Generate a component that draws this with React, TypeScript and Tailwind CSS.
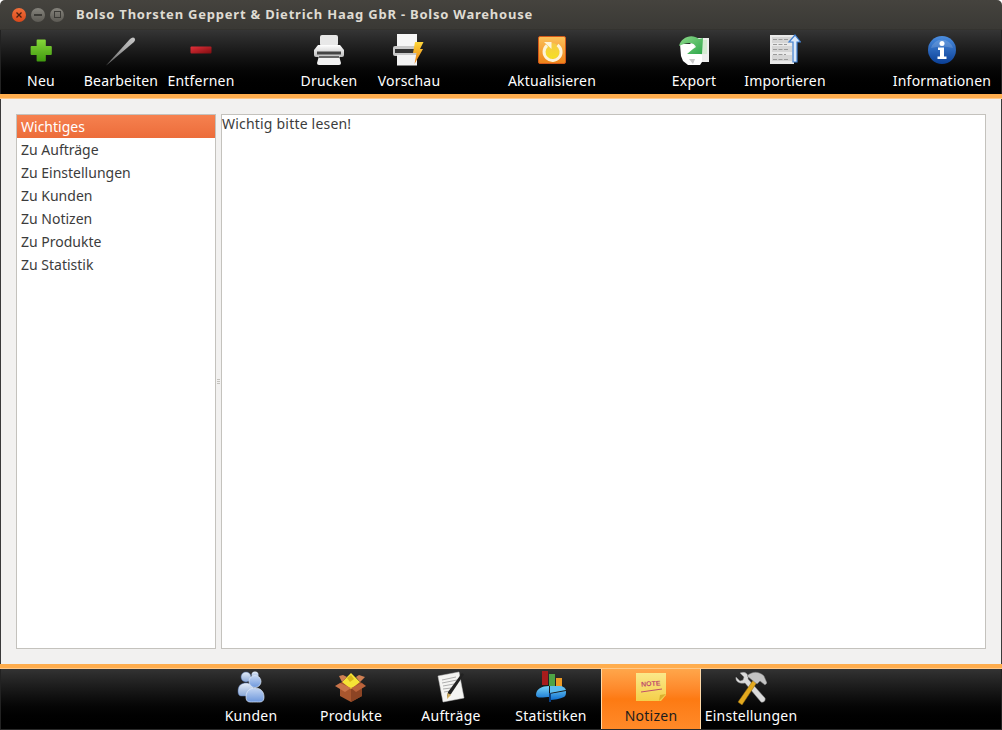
const FONT = "font-['Noto_Sans',sans-serif]"

function Plus() {
  return (
    <svg width="32" height="32" viewBox="0 0 32 32">
      <defs><linearGradient id="gp" x1="0" y1="0" x2="0" y2="1"><stop offset="0" stopColor="#86d63a" /><stop offset="1" stopColor="#3f9a0e" /></linearGradient></defs>
      <path d="M12 5.500h8a1 1 0 0 1 1 1V12h5.500a1 1 0 0 1 1 1v7a1 1 0 0 1-1 1H21v5.500a1 1 0 0 1-1 1h-8a1 1 0 0 1-1-1V21H5.500a1 1 0 0 1-1-1v-7a1 1 0 0 1 1-1H11V6.500a1 1 0 0 1 1-1z" fill="url(#gp)" transform="translate(1.500 0) scale(.92 1)" />
    </svg>
  )
}

function Pen() {
  return (
    <svg width="32" height="32" viewBox="0 0 32 32">
      <defs><linearGradient id="gn" x1="0" y1="1" x2="1" y2="0"><stop offset="0" stopColor="#5c5c5c" /><stop offset=".6" stopColor="#a8a8a8" /><stop offset="1" stopColor="#c8c8c8" /></linearGradient></defs>
      <path d="M1 31.500 L25 5 Q27.500 2.500 29.500 4 Q31 6 29 8 L3 30z" fill="url(#gn)" />
    </svg>
  )
}

function Minus() {
  return (
    <svg width="32" height="32" viewBox="0 0 32 32">
      <defs><linearGradient id="gm" x1="0" y1="0" x2="1" y2="1"><stop offset="0" stopColor="#e4303a" /><stop offset="1" stopColor="#7f0d10" /></linearGradient></defs>
      <rect x="5.500" y="12.500" width="21" height="7" rx="1" fill="url(#gm)" />
    </svg>
  )
}

function Printer() {
  return (
    <svg width="32" height="32" viewBox="0 0 32 32">
      <defs><linearGradient id="gr" x1="0" y1="0" x2="0" y2="1"><stop offset="0" stopColor="#fff" /><stop offset="1" stopColor="#bdbdbd" /></linearGradient></defs>
      <rect x="7" y="1" width="18" height="11" rx="2" fill="#e8e8e8" />
      <path d="M5 11h22l4 5v5a2 2 0 0 1-2 2H3a2 2 0 0 1-2-2v-5z" fill="url(#gr)" />
      <rect x="4" y="17.500" width="24" height="3" fill="#444" />
      <path d="M6 22h20l2 7a2 2 0 0 1-2 2H6a2 2 0 0 1-2-2z" fill="#f2f2f2" />
      <rect x="6" y="22" width="20" height="2" fill="#666" />
    </svg>
  )
}

function Preview() {
  return (
    <svg width="32" height="32" viewBox="0 0 32 32">
      <defs><linearGradient id="gb" x1="0" y1="0" x2="0" y2="1"><stop offset="0" stopColor="#ffd83c" /><stop offset="1" stopColor="#e77a10" /></linearGradient></defs>
      <rect x="4" y="0" width="20" height="12" fill="#f6f6f6" />
      <rect x="0" y="12" width="26" height="10" rx="2" fill="#c9c9c9" />
      <rect x="2" y="15" width="22" height="4" fill="#333" />
      <rect x="4" y="21" width="20" height="10.500" fill="#f3f3f3" />
      <path d="M22 8h8.500l-3.500 7h3l-8.500 15 2-11h-3.500z" fill="url(#gb)" />
    </svg>
  )
}

function Refresh() {
  return (
    <svg width="32" height="32" viewBox="0 0 32 32">
      <defs>
        <linearGradient id="gf" x1="0" y1="0" x2="0" y2="1"><stop offset="0" stopColor="#fcc25a" /><stop offset="1" stopColor="#ee8218" /></linearGradient>
        <linearGradient id="gy" x1="0" y1="0" x2="0" y2="1"><stop offset="0" stopColor="#f6c848" /><stop offset="1" stopColor="#f5e020" /></linearGradient>
      </defs>
      <rect x="2.500" y="2.500" width="27" height="27" rx="1.500" fill="url(#gf)" stroke="#d2591a" />
      <circle cx="16" cy="17" r="8" fill="url(#gy)" />
      <path d="M11 11.500 A8.500 8.500 0 1 0 21.500 11" fill="none" stroke="#fdf3d8" strokeWidth="3" />
      <path d="M8 8h7.500v7z" fill="#fdf3d8" />
    </svg>
  )
}

function Export() {
  return (
    <svg width="32" height="32" viewBox="0 0 32 32">
      <defs><linearGradient id="ge" x1="0" y1="0" x2="1" y2="1"><stop offset="0" stopColor="#8ed88a" /><stop offset="1" stopColor="#2ea84b" /></linearGradient></defs>
      <path d="M12 4h19v24H14z" fill="#eeeeee" />
      <path d="M2 10h14l1 8 7 3v7l-2 3H10l-5-4-2-5z" fill="#fff" />
      <path d="M11 25h6l-2 5z" fill="#c8c8c8" />
      <rect x="22" y="6" width="7" height="14" fill="#d5ecd2" />
      <path d="M1 12C3 3 14-1 21 5l4-1-1 16H9l6-5 3-2c-2-5-9-5-17-1z" fill="url(#ge)" />
    </svg>
  )
}

function Import() {
  return (
    <svg width="32" height="32" viewBox="0 0 32 32">
      <rect x="1" y="1" width="24" height="29" fill="#e9e9e9" />
      <rect x="3" y="3" width="20" height="6" fill="#d5d5d5" />
      <rect x="3" y="12" width="20" height="6" fill="#d5d5d5" />
      <rect x="3" y="21" width="20" height="6" fill="#d5d5d5" />
      <g stroke="#9a9a9a" strokeWidth="1" strokeDasharray="4 1.500">
        <path d="M4 5.500h16M4 10.500h14M4 15.500h15M4 20.500h13M4 25.500h16" />
      </g>
      <path d="M26 1l5.500 7H28v20h-4V8h-4z" fill="#dbe8f8" stroke="#3f7fd0" strokeWidth="1.200" />
    </svg>
  )
}

function Info() {
  return (
    <svg width="32" height="32" viewBox="0 0 32 32">
      <defs><linearGradient id="gi" x1="0" y1="0" x2="0" y2="1"><stop offset="0" stopColor="#4c8ee0" /><stop offset="1" stopColor="#0a3f96" /></linearGradient></defs>
      <circle cx="16" cy="16" r="14" fill="url(#gi)" />
      <path d="M5 14a11.500 11.500 0 0 1 22 0q-11-3-22 0z" fill="#fff" opacity=".15" />
      <circle cx="16" cy="9.500" r="2.500" fill="#fff" />
      <path d="M12 13.500h6v9h2.500v2.500h-9v-2.500H14v-6.500h-2z" fill="#fff" />
    </svg>
  )
}

function Users() {
  return (
    <svg width="32" height="32" viewBox="0 0 32 32">
      <defs>
        <linearGradient id="gu" x1="0" y1="0" x2="0" y2="1"><stop offset="0" stopColor="#e6eef8" /><stop offset="1" stopColor="#8aa8d8" /></linearGradient>
        <linearGradient id="gv" x1="0" y1="0" x2="0" y2="1"><stop offset="0" stopColor="#c4d6f2" /><stop offset="1" stopColor="#6d97dc" /></linearGradient>
      </defs>
      <circle cx="11" cy="6" r="5" fill="url(#gu)" stroke="#4f6fa8" strokeWidth=".5" />
      <circle cx="20" cy="4" r="3.500" fill="url(#gu)" />
      <path d="M3 20c0-6 4-8 8-8s8 2 8 8-3 5-8 5-8 1-8-5z" fill="url(#gu)" stroke="#4f6fa8" strokeWidth=".5" />
      <circle cx="20" cy="10.500" r="6" fill="url(#gv)" stroke="#dfe9f8" strokeWidth=".7" />
      <path d="M11 26c0-6 4-9 9-9s9 3 9 9-4 5-9 5-9 1-9-5z" fill="url(#gv)" stroke="#dfe9f8" strokeWidth=".7" />
    </svg>
  )
}

function Box() {
  return (
    <svg width="32" height="32" viewBox="0 0 32 32">
      <path d="M5 12l11-5 11 5v13l-11 6-11-6z" fill="#a8562e" />
      <path d="M16 18v13l11-6V12z" fill="#8c4424" />
      <path d="M7 11l9-9 9 9-9 7z" fill="#f6e336" />
      <path d="M12 7l4-3 3 4-4 3z" fill="#d8b81a" />
      <path d="M5 12L0 15l10 6 6-4z" fill="#c9744a" />
      <path d="M27 12l4 3-10 6-5-4z" fill="#bb633b" />
      <path d="M7 11L4 5l4-1 4 2zM25 11l5-5-6-2-3 2z" fill="#cf8053" />
    </svg>
  )
}

function Order() {
  return (
    <svg width="32" height="32" viewBox="0 0 32 32">
      <path d="M3 5L24 1l5 26-21 4z" fill="#f4f4f2" stroke="#c8c8c8" strokeWidth=".5" />
      <g stroke="#9c9c9c" strokeWidth=".8">
        <path d="M7 9l14-3M7 12l15-3M8 15l11-2M8 18l8-1M9 21l6-1" />
      </g>
      <path d="M12 26l1-5L27 2l2 1.500L16 23z" fill="#222" />
      <path d="M12 28l.5-6 3.500 2z" fill="#d4b060" />
    </svg>
  )
}

function Chart() {
  return (
    <svg width="32" height="32" viewBox="0 0 32 32">
      <defs><linearGradient id="gc" x1="0" y1="0" x2="0" y2="1"><stop offset="0" stopColor="#79d4f8" /><stop offset="1" stopColor="#0f6fd0" /></linearGradient></defs>
      <rect x="7" y="0" width="6" height="14" fill="#a81c1c" />
      <rect x="14" y="3" width="6" height="12" fill="#4ea345" />
      <rect x="21" y="7" width="6" height="9" fill="#ec9a25" />
      <path d="M1 24c0-6 6-9 13-9v8l17-3c0 2 0 5-2 6-4 2-10 3-14 3v-3c-6 0-14 2-14-2z" fill="url(#gc)" />
      <path d="M15 15h10c3 0 5 2 6 4l-16 3z" fill="#5ebdf0" />
      <path d="M14 22h2v9h-2z" fill="#0a3f80" />
    </svg>
  )
}

function Note() {
  return (
    <svg width="32" height="32" viewBox="0 0 32 32">
      <defs><linearGradient id="gt" x1="0" y1="0" x2="0" y2="1"><stop offset="0" stopColor="#fbe88a" /><stop offset="1" stopColor="#f4cf4a" /></linearGradient></defs>
      <path d="M1 2h30v22l-5 6H1z" fill="url(#gt)" />
      <path d="M31 23l-6 1-1 6z" fill="#d9b030" />
      <text x="16" y="15" textAnchor="middle" fontSize="7" fontWeight="700" fill="#c0506a" transform="rotate(-4 16 15)" fontFamily="Liberation Sans, sans-serif">NOTE</text>
      <path d="M6 21l21-3" stroke="#c0506a" strokeWidth="1" />
    </svg>
  )
}

function Tools() {
  return (
    <svg width="32" height="34" viewBox="0 0 32 34">
      <path d="M1 6l4 4 3-1 1-3-4-4c5-2 9 1 8 6l17 19c1 3-2 5-4 4L10 12C5 13 0 11 1 6z" fill="#dadada" stroke="#888" strokeWidth=".5" />
      <path d="M3 31l16-23 3.500 2.500L7 34z" fill="#e3a91e" stroke="#8a6410" strokeWidth=".5" />
      <path d="M12 5c5-5 12-5 17 0l3 7-2 2-5-4-3 3-5-4z" fill="#c4c4c4" stroke="#777" strokeWidth=".5" />
    </svg>
  )
}

const TOOLS = [
  { label: 'Neu', icon: <Plus />, w: 'w-20', ml: '' },
  { label: 'Bearbeiten', icon: <Pen />, w: 'w-20', ml: '' },
  { label: 'Entfernen', icon: <Minus />, w: 'w-20', ml: '' },
  { label: 'Drucken', icon: <Printer />, w: 'w-20', ml: 'ml-[48px]' },
  { label: 'Vorschau', icon: <Preview />, w: 'w-20', ml: '' },
  { label: 'Aktualisieren', icon: <Refresh />, w: 'w-[100px]', ml: 'ml-[53px]' },
  { label: 'Export', icon: <Export />, w: 'w-20', ml: 'ml-[52px]' },
  { label: 'Importieren', icon: <Import />, w: 'w-[102px]', ml: '' },
  { label: 'Informationen', icon: <Info />, w: 'w-[100px]', ml: 'ml-[56px]' },
]

const TABS = [
  { label: 'Kunden', icon: <Users /> },
  { label: 'Produkte', icon: <Box /> },
  { label: 'Aufträge', icon: <Order /> },
  { label: 'Statistiken', icon: <Chart /> },
  { label: 'Notizen', icon: <Note />, active: true },
  { label: 'Einstellungen', icon: <Tools /> },
]

const NOTES = ['Wichtiges', 'Zu Aufträge', 'Zu Einstellungen', 'Zu Kunden', 'Zu Notizen', 'Zu Produkte', 'Zu Statistik']

export default function App() {
  return (
    <div className={`${FONT} w-[1002px] h-[730px] overflow-hidden flex flex-col bg-white text-[14px]`}>
      {/* Title bar */}
      <div className="h-[30px] shrink-0 rounded-t-[5px] flex items-center bg-gradient-to-b from-[#45433e] to-[#3a3935] border-b border-[#34332f]">
        <div className="ml-3 flex items-center gap-[5px]">
          <div className="w-[14px] h-[14px] rounded-full bg-gradient-to-b from-[#f2703a] to-[#d9481a] flex items-center justify-center">
            <svg width="8" height="8" viewBox="0 0 8 8"><path d="M1.500 1.500l5 5M6.500 1.500l-5 5" stroke="#4a2010" strokeWidth="1.300" /></svg>
          </div>
          <div className="w-[14px] h-[14px] rounded-full bg-gradient-to-b from-[#85837c] to-[#5c5a54] flex items-center justify-center">
            <div className="w-2 h-[2px] bg-[#3b3a36]" />
          </div>
          <div className="w-[14px] h-[14px] rounded-full bg-gradient-to-b from-[#85837c] to-[#5c5a54] flex items-center justify-center">
            <div className="w-[7px] h-[7px] border border-[#3b3a36]" />
          </div>
        </div>
        <span className="ml-3 text-[13px] font-bold tracking-[0.78px] text-[#dfdbd2]">Bolso Thorsten Geppert &amp; Dietrich Haag GbR - Bolso Warehouse</span>
      </div>

      {/* Toolbar */}
      <div className="h-[64px] shrink-0 flex bg-gradient-to-b from-[#353535] to-black border-x border-[#222]">
        {TOOLS.map(t => (
          <div key={t.label} className={`${t.w} ${t.ml} shrink-0 flex flex-col items-center pt-1`}>
            {t.icon}
            <span className="mt-[5px] leading-5 text-[14px] tracking-[0.2px] text-white whitespace-nowrap">{t.label}</span>
          </div>
        ))}
      </div>
      <div className="h-[5px] shrink-0 bg-[#ffad4d] border-b border-[#ffc98a]" />

      {/* Content */}
      <div className="flex-1 min-h-0 flex py-[15px] px-[15px] bg-[#f2f1f0] border-x border-[#3a3a3a]">
        <div className="w-[200px] shrink-0 bg-white border border-[#c4c2bd]">
          {NOTES.map((n, i) => (
            <div key={n} className={i === 0
              ? 'h-[23px] pl-1 leading-[24px] text-white bg-gradient-to-b from-[#f6814f] to-[#ec6c3a]'
              : 'h-[23px] pl-1 leading-[24px] text-[#3c3c3c]'}>{n}</div>
          ))}
        </div>
        <div className="w-[5px] shrink-0 flex flex-col items-center justify-center gap-px">
          <div className="w-[3px] h-px bg-[#c4c2bd]" />
          <div className="w-[3px] h-px bg-[#c4c2bd]" />
          <div className="w-[3px] h-px bg-[#c4c2bd]" />
        </div>
        <div className="flex-1 bg-white border border-[#c4c2bd] leading-[18px] tracking-[0.2px] text-[#3c3c3c]">Wichtig bitte lesen!</div>
      </div>

      {/* Tabs */}
      <div className="h-[5px] shrink-0 bg-[#ffad4d] border-b border-[#ffc98a]" />
      <div className="h-[60px] shrink-0 flex justify-center bg-gradient-to-b from-[#333] to-black border-x border-[#222]">
        {TABS.map(t => (
          <div key={t.label} className={t.active
            ? 'w-[100px] h-[60px] flex flex-col items-center pt-[2px] border-x border-[#ffd9a8] bg-gradient-to-b from-[#ffa64a] via-[#fd7a12] to-[#ff8a28] text-[#1c1c1c]'
            : 'w-[100px] h-[60px] flex flex-col items-center pt-[2px] text-white'}>
            <div className="h-8">{t.icon}</div>
            <span className="mt-[3px] leading-5 text-[14px] tracking-[0.25px] whitespace-nowrap">{t.label}</span>
          </div>
        ))}
      </div>
      <div className="h-px shrink-0 bg-[#2a2a2a]" />
    </div>
  )
}
